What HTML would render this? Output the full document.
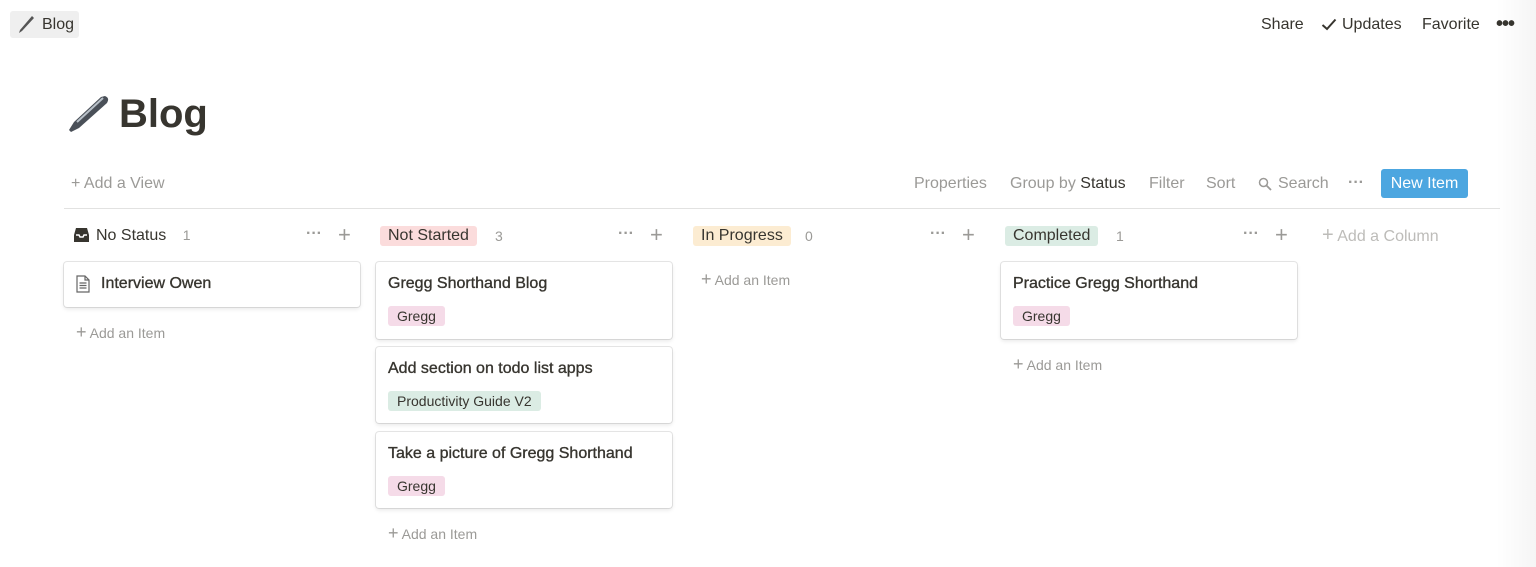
<!DOCTYPE html>
<html><head><meta charset="utf-8"><style>
*{box-sizing:border-box;margin:0;padding:0}
body{width:1536px;height:567px;overflow:hidden;background:#fff;font-family:"Liberation Sans",sans-serif;color:#37352f;position:relative}
.a{position:absolute;white-space:nowrap}
.shadow{position:absolute;right:0;top:0;width:40px;height:567px;background:linear-gradient(to right,rgba(0,0,0,0),rgba(0,0,0,0.04))}
.card{position:absolute;width:296px;border-radius:3px;box-shadow:0 0 0 1px rgba(15,15,15,.1),0 2px 4px rgba(15,15,15,.1);background:#fff}
.ct{position:absolute;left:12px;top:13px;font-size:16px;color:#37352f;-webkit-text-stroke:0.35px #37352f}
.tag{position:absolute;left:12px;top:44px;font-size:14px;padding:2px 9px;border-radius:3px;height:20px;line-height:16px}
.pink{background:#f5dbe8}.green{background:#dbece4}
.gray{color:#9b9a97}
.hdr{font-size:16px;top:226px;padding:1px 8px;border-radius:3px}
.plus{position:absolute;font-size:22px;color:#9b9a97;font-weight:300;line-height:1}
.dots{position:absolute;color:#9b9a97;font-size:16px;letter-spacing:0px;font-weight:bold}
.add{font-size:14px;color:#9b9a97}
</style></head><body>
<div class="a" style="left:10px;top:11px;width:69px;height:27px;background:#efefef;border-radius:3px"></div>
<svg class="a" style="left:17px;top:14px" width="18" height="20" viewBox="0 0 18 20"><path d="M15 2 L3 16 L2 19 L5 17 L17 4 Z" fill="#555"/></svg>
<div class="a" style="left:42px;top:16px;font-size:16px">Blog</div>
<div class="a" style="left:1261px;top:16px;font-size:16px">Share</div>
<svg class="a" style="left:1321px;top:18px" width="16" height="13" viewBox="0 0 16 13"><path d="M1.5 7 L6 11 L14.5 1.5" stroke="#37352f" stroke-width="2" fill="none"/></svg>
<div class="a" style="left:1342px;top:16px;font-size:16px">Updates</div>
<div class="a" style="left:1422px;top:16px;font-size:16px">Favorite</div>
<div class="a" style="left:1496px;top:13px;font-size:20px;font-weight:bold;letter-spacing:-1px">•••</div>
<svg class="a" style="left:67px;top:94px" width="44" height="40" viewBox="0 0 44 40"><path d="M38 2 Q43 4 40 9 L12 34 L4 38 L2 36 L7 28 L34 3 Z" fill="#4a5058"/><path d="M36 4 L10 28" stroke="#b8c0c8" stroke-width="2"/></svg>
<div class="a" style="left:119px;top:92px;font-size:40px;font-weight:bold">Blog</div>
<div class="a gray" style="left:71px;top:175px;font-size:16px">+ Add a View</div>
<div class="a gray" style="left:914px;top:175px;font-size:16px">Properties</div>
<div class="a gray" style="left:1010px;top:175px;font-size:16px">Group by <span style="color:#37352f">Status</span></div>
<div class="a gray" style="left:1149px;top:175px;font-size:16px">Filter</div>
<div class="a gray" style="left:1206px;top:175px;font-size:16px">Sort</div>
<svg class="a" style="left:1258px;top:177px" width="14" height="14" viewBox="0 0 14 14"><circle cx="5.5" cy="5.5" r="4" stroke="#9b9a97" stroke-width="1.5" fill="none"/><path d="M8.5 8.5 L13 13" stroke="#9b9a97" stroke-width="1.8"/></svg>
<div class="a gray" style="left:1278px;top:175px;font-size:16px">Search</div>
<div class="a gray" style="left:1348px;top:174px;font-size:16px;font-weight:bold">···</div>
<div class="a" style="left:1381px;top:169px;width:87px;height:29px;background:#4ca6e0;border-radius:3px;color:#fff;font-size:16px;text-align:center;line-height:29px">New Item</div>
<div class="a" style="left:64px;top:208px;width:1436px;height:1px;background:#e2e2e1"></div>

<svg class="a" style="left:73px;top:227px" width="17" height="16" viewBox="0 0 17 16"><path d="M1 8 L3 1 H14 L16 8 V15 H1 Z" fill="#37352f"/><path d="M3 8 H6 L7 10 H10 L11 8 H14" stroke="#fff" stroke-width="1.5" fill="none"/></svg>
<div class="a" style="left:96px;top:227px;font-size:16px">No Status <span class="gray" style="margin-left:12px;font-size:14px">1</span></div>
<div class="a hdr" style="left:380px;background:#fbdcdc">Not Started</div><div class="a gray" style="left:495px;top:228px;font-size:14px">3</div>
<div class="a hdr" style="left:693px;background:#fcecd2">In Progress</div><div class="a gray" style="left:805px;top:228px;font-size:14px">0</div>
<div class="a hdr" style="left:1005px;background:#dbece4">Completed</div><div class="a gray" style="left:1116px;top:228px;font-size:14px">1</div>
<div class="dots" style="left:306px;top:225px">···</div><div class="plus" style="left:338px;top:224px">+</div>
<div class="dots" style="left:618px;top:225px">···</div><div class="plus" style="left:650px;top:224px">+</div>
<div class="dots" style="left:930px;top:225px">···</div><div class="plus" style="left:962px;top:224px">+</div>
<div class="dots" style="left:1243px;top:225px">···</div><div class="plus" style="left:1275px;top:224px">+</div>
<div class="a" style="left:1322px;top:224px;font-size:16px;color:#bdbcb9"><span style="font-size:20px">+</span> Add a Column</div>

<div class="card" style="left:64px;top:262px;height:45px">
<svg style="position:absolute;left:12px;top:13px" width="14" height="18" viewBox="0 0 14 18"><path d="M1 1 H9 L13 5 V17 H1 Z M9 1 V5 H13 M3.5 8 H10.5 M3.5 10.5 H10.5 M3.5 13 H10.5" stroke="#666" fill="none" stroke-width="1.2"/></svg>
<div class="ct" style="left:37px">Interview Owen</div></div>
<div class="a add" style="left:76px;top:322px"><span style="font-size:18px">+</span> Add an Item</div>

<div class="card" style="left:376px;top:262px;height:77px"><div class="ct">Gregg Shorthand Blog</div><div class="tag pink">Gregg</div></div>
<div class="card" style="left:376px;top:347px;height:76px"><div class="ct">Add section on todo list apps</div><div class="tag green">Productivity Guide V2</div></div>
<div class="card" style="left:376px;top:432px;height:76px"><div class="ct">Take a picture of Gregg Shorthand</div><div class="tag pink">Gregg</div></div>
<div class="a add" style="left:388px;top:523px"><span style="font-size:18px">+</span> Add an Item</div>

<div class="a add" style="left:701px;top:269px"><span style="font-size:18px">+</span> Add an Item</div>

<div class="card" style="left:1001px;top:262px;height:77px"><div class="ct">Practice Gregg Shorthand</div><div class="tag pink">Gregg</div></div>
<div class="a add" style="left:1013px;top:354px"><span style="font-size:18px">+</span> Add an Item</div>
<div class="shadow"></div>
</body></html>
